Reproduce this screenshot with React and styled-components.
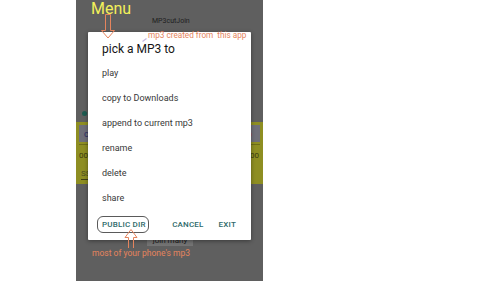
import React from "react"
import styled, {createGlobalStyle} from "styled-components"

const GlobalStyle = createGlobalStyle`
  html, body {
    margin: 0;
    padding: 0;
    background: #ffffff;
  }
  body {
    font-family: Roboto, "Noto Sans", "Liberation Sans", sans-serif;
  }
`

const Page = styled.div`
  position: relative;
  display: flex;
  width: 500px;
  height: 281px;
  padding-left: 76px;
  box-sizing: border-box;
  overflow: hidden;
  background: #ffffff;
`

const Phone = styled.div`
  position: relative;
  display: flex;
  flex-direction: column;
  width: 187px;
  height: 281px;
  background: #5f5f5f;
`

const AppTitle = styled.div`
  padding: 17px 0 0 76px;
  font-size: 7px;
  line-height: 9px;
  color: #1e1e1e;
`

const DotRow = styled.div`
  display: flex;
  margin-top: 84px;
  padding-left: 6px;
  height: 10px;
`

const Dot = styled.span`
  width: 5px;
  height: 5px;
  border-radius: 50%;
  background: ${p => p.color};
  margin-top: 1px;
`

const YellowPanel = styled.div`
  display: flex;
  flex-direction: column;
  margin-top: 2px;
  height: 62px;
  background: #8e8e22;
  padding: 3px 3px 0;
  box-sizing: border-box;
`

const SourceBox = styled.div`
  display: flex;
  align-items: center;
  justify-content: space-between;
  height: 17px;
  padding: 0 8px 0 5px;
  background: #6f6f79;
  color: #2c2c66;
  font-size: 9px;
`

const TimeRow = styled.div`
  display: flex;
  justify-content: space-between;
  align-items: center;
  height: 20px;
  border-top: 1px solid #6d6d18;
  margin-top: 2px;
  font-size: 8px;
  color: #3a3a10;
  padding: 0 1px 0 0;
`

const SaveRow = styled.div`
  display: flex;
  align-items: center;
  height: 18px;
  font-size: 8px;
  color: #4c4c20;
  padding-left: 2px;

  span {
    border-bottom: 1px solid #404015;
    padding-bottom: 1px;
  }
`

const JoinButton = styled.div`
  align-self: flex-start;
  margin: 51px 0 0 71px;
  width: 46px;
  height: 11px;
  background: #747474;
  color: #1c1c1c;
  font-size: 8px;
  line-height: 11px;
  text-align: center;
`

const Dialog = styled.div`
  position: absolute;
  left: 12px;
  top: 32px;
  width: 163px;
  height: 208px;
  background: #ffffff;
  border-radius: 1px;
  box-shadow: 0 1px 4px rgba(0, 0, 0, 0.4);
  display: flex;
  flex-direction: column;
  padding-top: 6px;
  box-sizing: border-box;
`

const DialogTitle = styled.div`
  padding-left: 14px;
  font-size: 12px;
  line-height: 22px;
  color: #151515;
`

const ItemList = styled.div`
  display: flex;
  flex-direction: column;
  padding-top: 0.5px;
`

const Item = styled.div`
  height: 25px;
  line-height: 25px;
  padding-left: 14px;
  font-size: 9px;
  color: #383838;
`

const ButtonRow = styled.div`
  display: flex;
  align-items: center;
  height: 28px;
  padding: 0 15px 0 14px;
  gap: 15px;
`

const TextButton = styled.span`
  font-size: 8px;
  font-weight: 500;
  letter-spacing: 0.2px;
  color: #2d6a6a;
  margin-right: ${p => (p.$push ? "auto" : "0")};
`

const MenuLabel = styled.div`
  position: absolute;
  left: 91px;
  top: 0;
  font-size: 16px;
  line-height: 17px;
  color: #f2ef5a;
`

const Note = styled.div`
  position: absolute;
  left: ${p => p.$x}px;
  top: ${p => p.$y}px;
  font-size: ${p => p.$size}px;
  line-height: 10px;
  color: #e5845d;
  white-space: nowrap;
`

const Outline = styled.div`
  position: absolute;
  left: 97px;
  top: 216px;
  width: 52px;
  height: 17px;
  border: 1.3px solid #5a5a5a;
  border-radius: 6px;
  box-sizing: border-box;
`

const Overlay = styled.svg`
  position: absolute;
  left: 0;
  top: 0;
  pointer-events: none;
`

export default function App() {
  return (
    <>
      <GlobalStyle/>
      <Page>
        <Phone>
          <AppTitle>MP3cutJoin</AppTitle>
          <DotRow>
            <Dot color="#1d5a50"/>
          </DotRow>
          <YellowPanel>
            <SourceBox>
              <span>c</span>
              <Dot color="#8a5a66"/>
            </SourceBox>
            <TimeRow>
              <span>00</span>
              <span>00</span>
            </TimeRow>
            <SaveRow>
              <span>SS</span>
            </SaveRow>
          </YellowPanel>
          <JoinButton>join many</JoinButton>

          <Dialog>
            <DialogTitle>pick a MP3 to</DialogTitle>
            <ItemList>
              <Item>play</Item>
              <Item>copy to Downloads</Item>
              <Item>append to current mp3</Item>
              <Item>rename</Item>
              <Item>delete</Item>
              <Item>share</Item>
            </ItemList>
            <ButtonRow>
              <TextButton $push>PUBLIC DIR</TextButton>
              <TextButton>CANCEL</TextButton>
              <TextButton>EXIT</TextButton>
            </ButtonRow>
          </Dialog>
        </Phone>

        <MenuLabel>Menu</MenuLabel>
        <Note $x={148} $y={30} $size={8.2}>mp3 created from&nbsp; this app</Note>
        <Note $x={92} $y={248} $size={8.5}>most of your phone's mp3</Note>
        <Outline/>

        <Overlay width="500" height="281" viewBox="0 0 500 281">
          <path
            d="M105.5 14.5 H110.5 V30.5 H114.5 L108 38 L101.5 30.5 H105.5 Z"
            fill="none"
            stroke="#e5845d"
            strokeWidth="1"
          />
          <path
            d="M128.5 248 V237.5 H125 L131 229.5 L137 237.5 H133.5 V248"
            fill="none"
            stroke="#e5845d"
            strokeWidth="1"
          />
          <path d="M146.5 38.5 L142.5 41.5" stroke="#c8b8e0" strokeWidth="1.2"/>
        </Overlay>
      </Page>
    </>
  )
}
